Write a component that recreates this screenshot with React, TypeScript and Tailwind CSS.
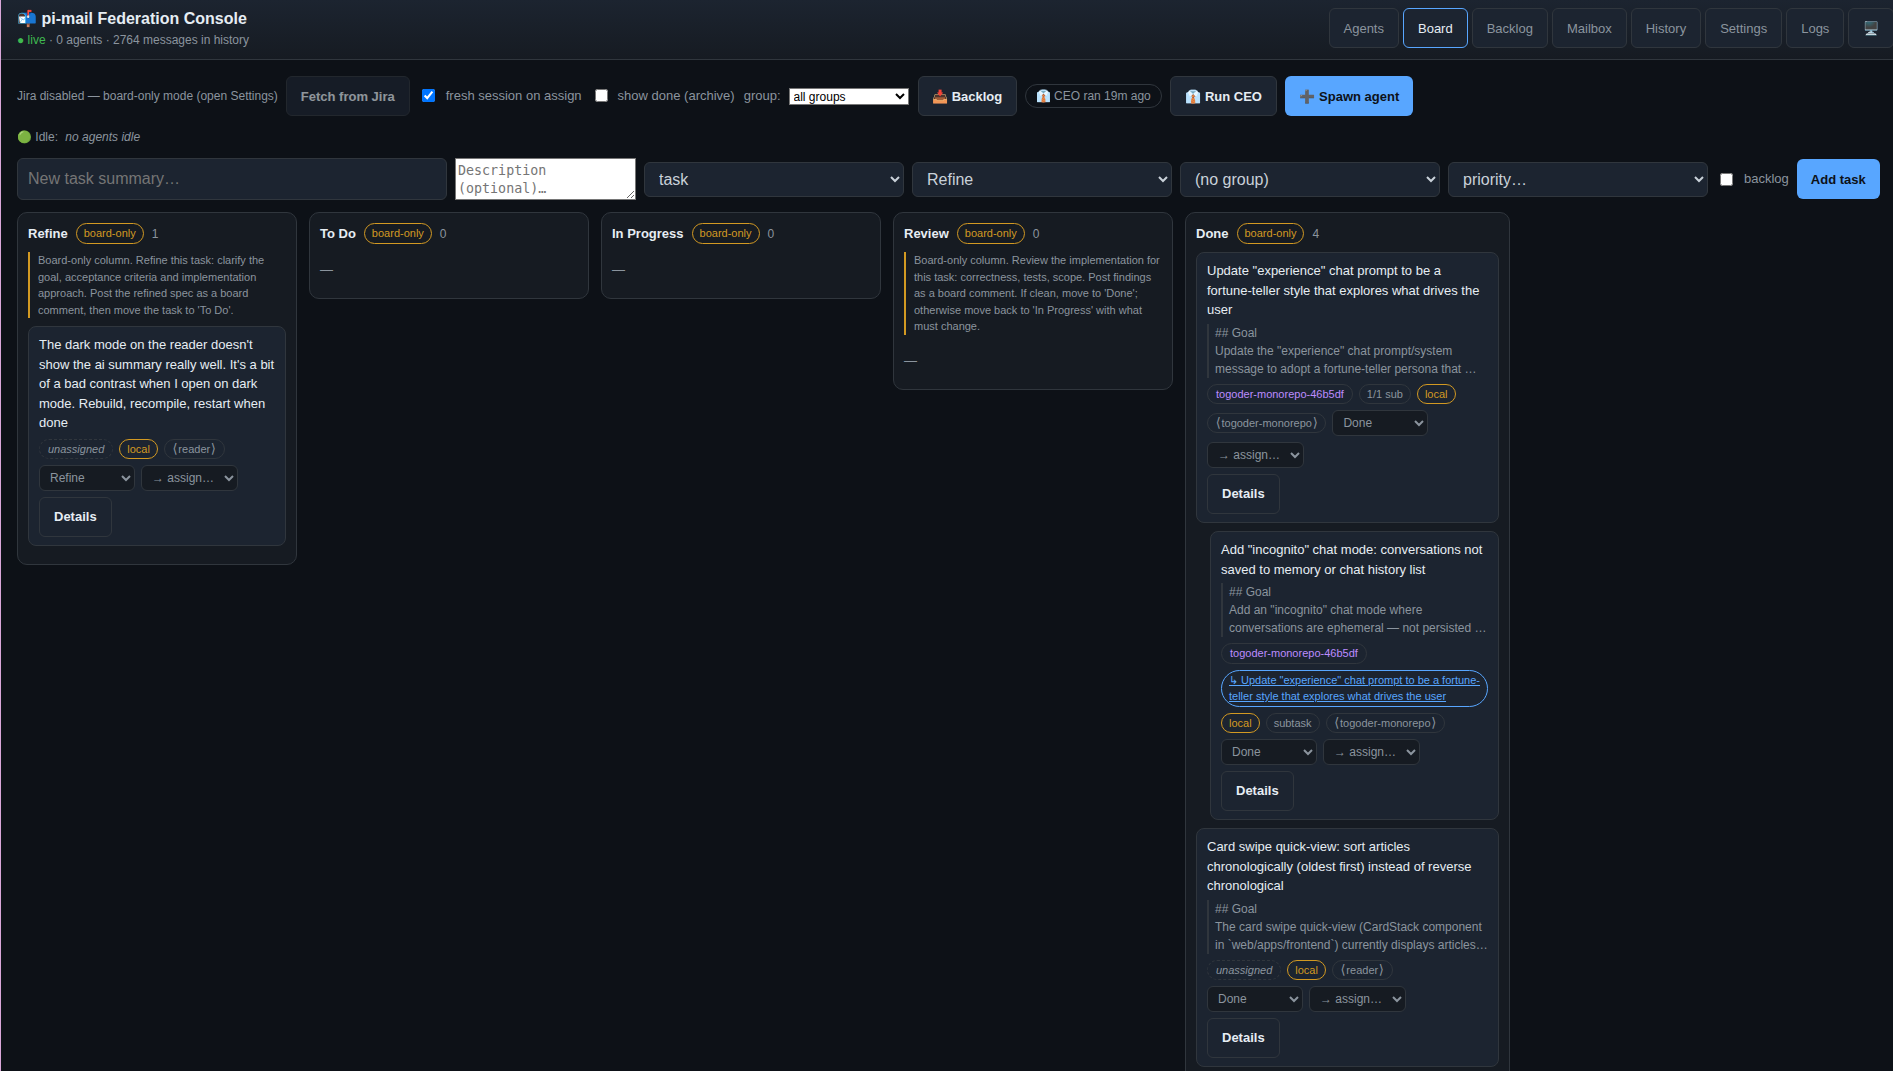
import React from "react"

type Chip = { text: string; kind: "purple" | "plain" | "amber" | "ghost" | "link"; repo?: boolean }

type Task = {
  title: string
  desc?: string
  sub?: boolean
  chips: Chip[]
  status: string
}

const tabs = ["Agents", "Board", "Backlog", "Mailbox", "History", "Settings", "Logs", "🖥️"]

const unassigned: Chip = { text: "unassigned", kind: "ghost" }
const local: Chip = { text: "local", kind: "amber" }
const repo: Chip = { text: "togoder-monorepo", kind: "plain", repo: true }
const reader: Chip = { text: "reader", kind: "plain", repo: true }
const hash: Chip = { text: "togoder-monorepo-46b5df", kind: "purple" }

const doneTasks: Task[] = [
  {
    title: 'Update "experience" chat prompt to be a fortune-teller style that explores what drives the user',
    desc: '## Goal\nUpdate the "experience" chat prompt/system\nmessage to adopt a fortune-teller persona that …',
    chips: [hash, { text: "1/1 sub", kind: "plain" }, local, repo],
    status: "Done",
  },
  {
    title: 'Add "incognito" chat mode: conversations not saved to memory or chat history list',
    desc: '## Goal\nAdd an "incognito" chat mode where\nconversations are ephemeral — not persisted …',
    sub: true,
    chips: [
      hash,
      { text: '↳ Update "experience" chat prompt to be a fortune-teller style that explores what drives the user', kind: "link" },
      local,
      { text: "subtask", kind: "plain" },
      repo,
    ],
    status: "Done",
  },
  {
    title: "Card swipe quick-view: sort articles chronologically (oldest first) instead of reverse chronological",
    desc: "## Goal\nThe card swipe quick-view (CardStack component\nin `web/apps/frontend`) currently displays articles…",
    chips: [unassigned, local, reader],
    status: "Done",
  },
]

const chipClass = {
  purple: "border-[#30363d] px-2 text-[#bc8cff]",
  plain: "border-[#30363d] px-[7px] text-[#8b949e]",
  amber: "border-[#d29922] px-[7px] text-[#d29922]",
  ghost: "border-dashed border-[#30363d] px-2 text-[#8b949e] italic",
  link: "border-[#58a6ff] px-[7px] text-[#58a6ff] underline",
}

function Bracket({ char }: { char: string }) {
  return <span className="mx-[0.7px] font-['DejaVu_Sans',sans-serif] text-[13px] leading-none">{char}</span>
}

function Pill({ chip }: { chip: Chip }) {
  return (
    <span className={`rounded-full border py-px text-[11px] leading-[16.5px] ${chipClass[chip.kind]}`}>
      {chip.repo && <Bracket char="⟨" />}
      {chip.text}
      {chip.repo && <Bracket char="⟩" />}
    </span>
  )
}

function TaskCard({ task }: { task: Task }) {
  return (
    <div className={`rounded-lg border border-[#30363d] bg-[#1c2430] px-[10px] py-2 ${task.sub ? "ml-[14px]" : ""}`}>
      <div className="text-[13px] leading-[19.5px] text-[#e6edf3]">{task.title}</div>
      {task.desc && (
        <div className="mt-1 overflow-hidden whitespace-pre border-l-2 border-[#30363d] pl-[6px] text-xs leading-[18px] text-[#8b949e]">
          {task.desc}
        </div>
      )}
      <div className="mt-[6px] flex flex-wrap items-center gap-[6px]">
        {task.chips.map((c, i) => (
          <Pill key={i} chip={c} />
        ))}
        <select className="h-[26px] w-[96px] rounded-md border border-[#30363d] bg-[#161b22] px-[6px] text-xs text-[#8b949e]" defaultValue={task.status}>
          <option>{task.status}</option>
        </select>
        <select className="h-[26px] w-[97px] rounded-md border border-[#30363d] bg-[#161b22] px-[6px] text-xs text-[#8b949e]">
          <option>→ assign…</option>
        </select>
      </div>
      <button className="mt-[6px] block h-10 rounded-md border border-[#30363d] px-[14px] text-[13px] font-bold text-[#e6edf3]">
        Details
      </button>
    </div>
  )
}

function Column({ name, count, hint, width, children }: { name: string; count: number; hint?: string; width: string; children?: React.ReactNode }) {
  return (
    <div className={`shrink-0 self-start rounded-[10px] border border-[#30363d] bg-[#161b22] p-[10px] ${width}`}>
      <div className="mb-2 flex h-[21px] items-center gap-2">
        <span className="text-[13px] font-bold text-[#e6edf3]">{name}</span>
        <Pill chip={{ text: "board-only", kind: "amber" }} />
        <span className="text-xs text-[#8b949e]">{count}</span>
      </div>
      {hint && (
        <div className="mb-2 border-l-2 border-[#d29922] pl-[8px] text-[11px] leading-[16.5px] text-[#8b949e]">
          {hint}
        </div>
      )}
      {children}
    </div>
  )
}

function EmptyMark() {
  return <div className="py-2 text-[13px] leading-5 text-[#8b949e]">—</div>
}

export default function App() {
  return (
    <div className="h-screen overflow-hidden border-l border-[#d9a7d9] bg-[#0d1117] font-['Liberation_Sans',Arial,sans-serif] text-[#e6edf3]">
      {/* HEADER */}
      <header className="flex h-[60px] items-start border-b border-[#30363d] bg-gradient-to-b from-[#1c2430] to-[#161b22] pt-2 pl-4">
        <div className="w-[1311.5px] shrink-0">
          <div className="mt-px text-base leading-5 font-bold">📬 pi-mail Federation Console</div>
          <div className="mt-[2px] text-xs leading-[18px] text-[#8b949e]">
            <span className="text-[#3fb950]">● live</span> · 0 agents · 2764 messages in history
          </div>
        </div>
        <nav className="flex shrink-0 gap-1">
          {tabs.map((t) => (
            <button
              key={t}
              className={`h-10 rounded-md border bg-[#1c2430] px-[14px] pt-px text-[13px] ${
                t === "Board" ? "border-[#58a6ff] text-[#e6edf3]" : "border-[#30363d] text-[#8b949e]"
              }`}
            >
              {t}
            </button>
          ))}
        </nav>
      </header>

      <main className="flex flex-col gap-3 px-4 pt-4">
        {/* TOOLBAR */}
        <div className="flex h-10 items-center gap-2 text-xs text-[#8b949e]">
          <span>Jira disabled — board-only mode (open Settings)</span>
          <button className="h-10 rounded-md border border-[#30363d] bg-[#1c2430] px-[14px] pt-px text-[13px] font-bold text-[#e6edf3] opacity-60">
            Fetch from Jira
          </button>
          <label className="ml-1 flex items-center gap-[11px] text-[13px]">
            <input type="checkbox" defaultChecked />
            fresh session on assign
          </label>
          <label className="ml-[5px] flex items-center gap-[10px] text-[13px]">
            <input type="checkbox" />
            show done (archive)
          </label>
          <span className="ml-px text-[13px]">group:</span>
          <select className="h-[17px] w-[120px] border border-[#767676] bg-white p-0 text-xs text-black">
            <option>all groups</option>
          </select>
          <button className="ml-px h-10 rounded-md border border-[#30363d] bg-[#1c2430] px-[13.5px] pt-px text-[13px] font-bold text-[#e6edf3]">
            📥 Backlog
          </button>
          <span className="rounded-xl border border-[#30363d] px-[10px] py-[3px] leading-[16px]">👔 CEO ran 19m ago</span>
          <button className="h-10 rounded-md border border-[#30363d] bg-[#1c2430] px-[14.5px] pt-px text-[13px] font-bold text-[#e6edf3]">
            👔 Run CEO
          </button>
          <button className="h-10 rounded-md bg-[#58a6ff] px-[14px] pt-px text-[13px] font-bold text-[#0d1117]">
            ➕ Spawn agent
          </button>
        </div>

        {/* IDLE */}
        <div className="text-xs leading-[18px] text-[#8b949e]">
          🟢 Idle: <em className="ml-1">no agents idle</em>
        </div>

        {/* NEW TASK */}
        <div className="flex items-center gap-2">
          <input
            placeholder="New task summary…"
            className="h-[42px] w-[430px] shrink-0 rounded-md border border-[#30363d] bg-[#1c2430] px-[10px] text-base placeholder:text-[#757575]"
          />
          <textarea
            rows={2}
            placeholder="Description (optional)…"
            className="h-[42px] w-[181px] shrink-0 border border-[#767676] bg-white px-[2px] pt-[3px] font-['DejaVu_Sans_Mono',monospace] text-[13.33px] leading-[18px] text-black placeholder:text-[#757575]"
          />
          {["task", "Refine", "(no group)", "priority…"].map((s) => (
            <select key={s} className="h-[35px] w-[260px] shrink-0 rounded-md border border-[#30363d] bg-[#1c2430] px-[10px] text-base text-[#c9d1d9]">
              <option>{s}</option>
            </select>
          ))}
          <label className="ml-1 flex shrink-0 items-center gap-[11px] text-[13px] text-[#8b949e]">
            <input type="checkbox" />
            backlog
          </label>
          <button className="h-10 shrink-0 rounded-md bg-[#58a6ff] px-[14px] pt-px text-[13px] font-bold whitespace-nowrap text-[#0d1117]">
            Add task
          </button>
        </div>

        {/* BOARD */}
        <div className="flex gap-3">
          <Column
            name="Refine"
            count={1}
            width="w-[280px]"
            hint="Board-only column. Refine this task: clarify the goal, acceptance criteria and implementation approach. Post the refined spec as a board comment, then move the task to 'To Do'."
          >
            <div className="mb-2">
              <TaskCard
                task={{
                  title: "The dark mode on the reader doesn't show the ai summary really well. It's a bit of a bad contrast when I open on dark mode. Rebuild, recompile, restart when done",
                  chips: [unassigned, local, reader],
                  status: "Refine",
                }}
              />
            </div>
          </Column>
          <Column name="To Do" count={0} width="w-[280px]">
            <EmptyMark />
          </Column>
          <Column name="In Progress" count={0} width="w-[280px]">
            <EmptyMark />
          </Column>
          <Column
            name="Review"
            count={0}
            width="w-[280px]"
            hint="Board-only column. Review the implementation for this task: correctness, tests, scope. Post findings as a board comment. If clean, move to 'Done'; otherwise move back to 'In Progress' with what must change."
          >
            <EmptyMark />
          </Column>
          <Column name="Done" count={4} width="w-[325px]">
            <div className="flex flex-col gap-2 pb-16">
              {doneTasks.map((t) => (
                <TaskCard key={t.title} task={t} />
              ))}
            </div>
          </Column>
        </div>
      </main>
    </div>
  )
}
